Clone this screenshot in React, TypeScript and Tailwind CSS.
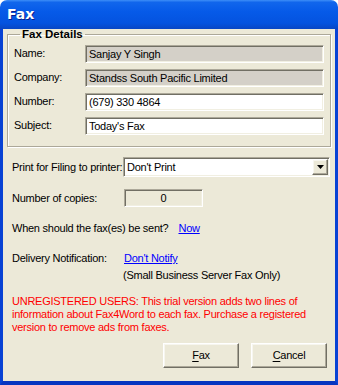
const sunken =
  "border border-t-[#aca899] border-l-[#aca899] border-b-white border-r-white shadow-[inset_1px_1px_0_#716f64,inset_-1px_-1px_0_#f1efe2]";

const raised =
  "border border-t-white border-l-white border-b-[#716f64] border-r-[#716f64] shadow-[inset_-1px_-1px_0_#aca899,inset_1px_1px_0_#f7f6ef]";

function Field({ label, value, readOnly }: { label: string; value: string; readOnly?: boolean }) {
  return (
    <div className="flex items-center h-[18px]">
      <span className="w-[71px] -mt-[2px]">{label}</span>
      <div
        className={`flex-1 h-[18px] flex items-center pl-[3px] ${sunken} ${
          readOnly ? "bg-[#d4d0c8]" : "bg-white"
        }`}
      >
        {value}
      </div>
    </div>
  );
}

function Button({ label }: { label: string }) {
  return (
    <button className={`w-[76px] h-[25px] bg-[#ece9d8] flex items-center justify-center ${raised}`}>
      <span>
        <span className="underline underline-offset-2">{label[0]}</span>
        {label.slice(1)}
      </span>
    </button>
  );
}

export default function App() {
  return (
    <div className="w-[338px] h-[385px] flex flex-col font-['Liberation_Sans',Arial,sans-serif] text-[11px] leading-[13px] tracking-[-0.25px] text-black">
      {/* title bar */}
      <div className="h-[29px] shrink-0 rounded-t-[7px] bg-[linear-gradient(to_bottom,#3d8ef8_0%,#1166ec_8%,#065ae8_40%,#0453df_80%,#0846c4_100%)] flex items-center pl-[7px]">
        <span className="text-white font-bold text-[14px] tracking-normal font-['DejaVu_Sans',sans-serif] [text-shadow:1px_1px_0_#0a1e8c]">
          Fax
        </span>
      </div>

      {/* body */}
      <div className="flex-1 bg-[#ece9d8] border-l-[3px] border-r-[3px] border-b-[4px] border-l-[#0842d4] border-r-[#0842d4] border-b-[#0735c0] flex flex-col">
        <fieldset className="mx-[4px] mt-[-1px] border border-[#aca899] shadow-[inset_1px_1px_0_#fff,1px_1px_0_#fff] px-[6px] pb-[11px] pt-[4px] flex flex-col gap-[6px]">
          <legend className="ml-[6px] px-[2px] font-bold text-[11.5px] tracking-normal">Fax Details</legend>
          <Field label="Name:" value="Sanjay Y Singh" readOnly />
          <Field label="Company:" value="Standss South Pacific Limited" readOnly />
          <Field label="Number:" value="(679) 330 4864" />
          <Field label="Subject:" value="Today's Fax" />
        </fieldset>

        <div className="pl-[9px] pr-[5px] mt-[10px] flex flex-col">
          <div className="flex items-center h-[20px]">
            <span className="w-[111px] whitespace-nowrap">Print for Filing to printer:</span>
            <div className={`flex-1 h-[20px] bg-white flex items-center pl-[3px] pr-[1px] ${sunken}`}>
              <span className="flex-1">Don't Print</span>
              <div className={`w-[16px] h-[16px] bg-[#ece9d8] flex items-center justify-center ${raised}`}>
                <svg width="7" height="4" viewBox="0 0 7 4">
                  <path d="M0 0h7L3.5 4z" fill="#000" />
                </svg>
              </div>
            </div>
          </div>

          <div className="flex items-center h-[18px] mt-[12px]">
            <span className="w-[112px]">Number of copies:</span>
            <div className={`w-[79px] h-[18px] flex items-center justify-center ${sunken}`}>0</div>
          </div>

          <div className="mt-[15px] flex">
            <span>When should the fax(es) be sent?</span>
            <span className="ml-[10px] text-[#0000ff] underline">Now</span>
          </div>

          <div className="mt-[17px] flex">
            <span className="w-[112px]">Delivery Notification:</span>
            <div className="flex flex-col gap-[4px]">
              <span className="text-[#0000ff] underline">Don't Notify</span>
              <span className="-ml-[1px]">(Small Business Server Fax Only)</span>
            </div>
          </div>

          <p className="mt-[13px] text-[#ff0000] w-[316px]">
            UNREGISTERED USERS: This trial version adds two lines of information about Fax4Word to each fax.
            Purchase a registered version to remove ads from faxes.
          </p>

          <div className="mt-[9px] flex justify-end gap-[12px] pr-[3px]">
            <Button label="Fax" />
            <Button label="Cancel" />
          </div>
        </div>
      </div>
    </div>
  );
}
